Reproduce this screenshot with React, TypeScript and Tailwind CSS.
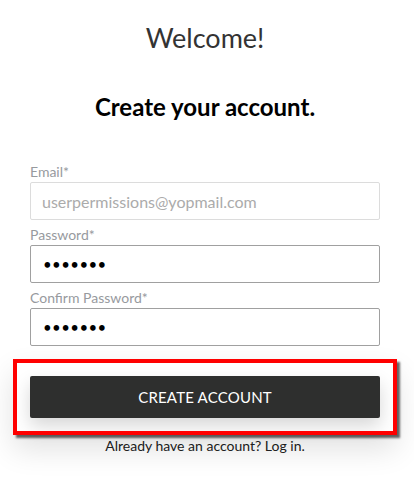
export default function App() {
  return (
    <div className="min-h-[477px] w-full bg-white font-['Lato','Open_Sans',sans-serif]">
      <div className="ml-[30px] w-[350px] pt-5">
        <h1 className="text-center text-[27px] leading-[36px] font-normal text-[#333333]">
          Welcome!
        </h1>
        <h2 className="mt-[36px] text-center text-[24px] leading-[30px] font-bold text-black">
          Create your account.
        </h2>

        <form className="mt-[39px] flex flex-col gap-1">
          <div>
            <label className="block text-[14px] leading-[21px] text-[#979a9e]">
              Email*
            </label>
            <input
              type="email"
              value="userpermissions@yopmail.com"
              readOnly
              className="h-[38px] w-full rounded-[2px] border border-[#dcdcdc] bg-white px-[11px] text-[16px] text-[#ababab] outline-none"
            />
          </div>

          <div>
            <label className="block text-[14px] leading-[21px] text-[#979a9e]">
              Password*
            </label>
            <input
              type="password"
              value="1234567"
              readOnly
              className="h-[38px] w-full rounded-[2px] border border-[#a0a0a0] bg-white px-[12px] text-[15px] tracking-[0.4px] text-black outline-none"
            />
          </div>

          <div>
            <label className="block text-[14px] leading-[21px] text-[#979a9e]">
              Confirm Password*
            </label>
            <input
              type="password"
              value="1234567"
              readOnly
              className="h-[38px] w-full rounded-[2px] border border-[#a0a0a0] bg-white px-[12px] text-[15px] tracking-[0.4px] text-black outline-none"
            />
          </div>
        </form>

        <div className="relative mt-[30px]">
          <button
            type="button"
            className="h-[42px] w-full rounded-[2px] bg-[#2e2f2e] text-[15px] tracking-[0.2px] text-white shadow-[0_8px_18px_rgba(0,0,0,0.16)]"
          >
            CREATE ACCOUNT
          </button>
          <div className="pointer-events-none absolute -inset-[17px] border-4 border-[#ff0000] shadow-[3px_3px_2px_rgba(0,0,0,0.6),0_14px_30px_rgba(0,0,0,0.12)]" />
        </div>

        <p className="mt-[18px] text-center text-[14px] leading-[20px] text-[#222222]">
          Already have an account? Log in.
        </p>
      </div>
    </div>
  );
}
